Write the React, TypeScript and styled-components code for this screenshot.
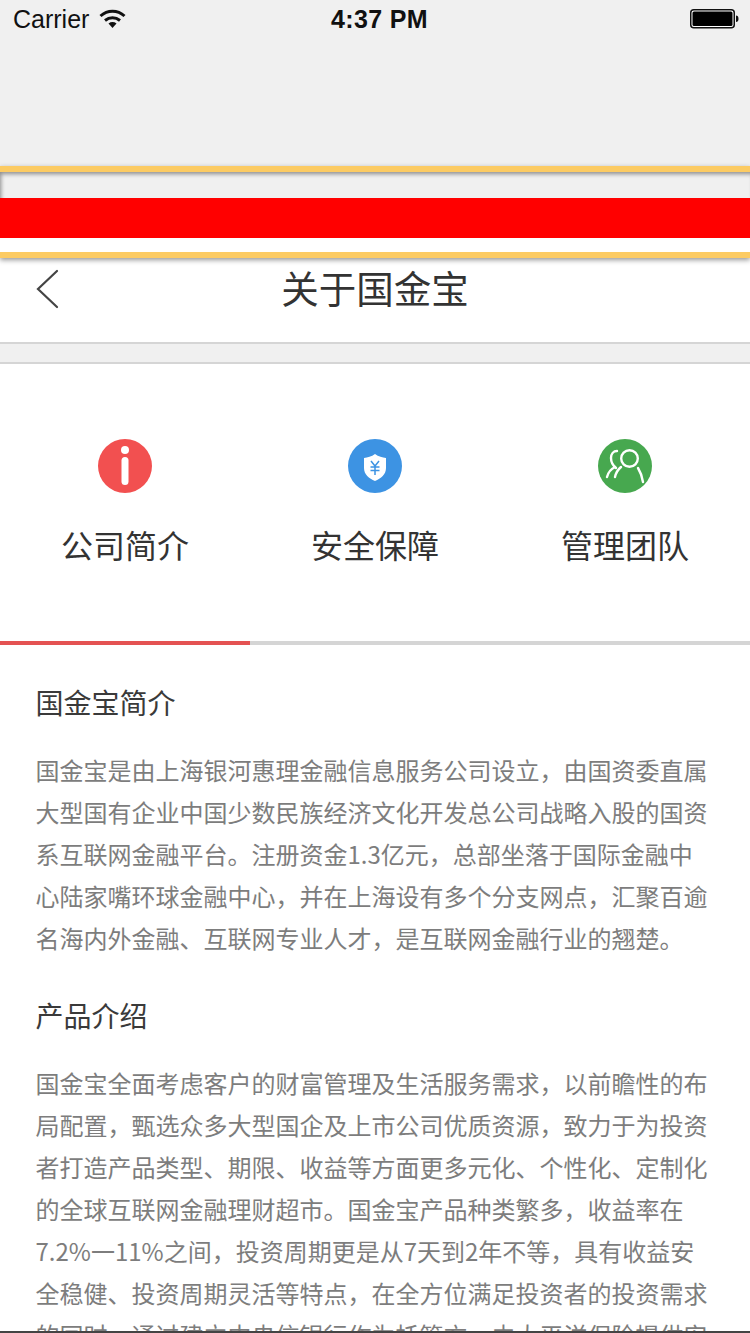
import React from "react";
import styled, { createGlobalStyle } from "styled-components";

const Global = createGlobalStyle`
  html, body { margin: 0; padding: 0; background: #fff; }
  body { width: 750px; height: 1333px; overflow: hidden; }
  #root { height: 1333px; }
`;
const cjk = `"Noto Sans CJK SC", "Noto Sans", sans-serif`;

const Page = styled.div`
  position: relative;
  width: 750px;
  height: 1333px;
  overflow: hidden;
  background: #fff;
  font-family: ${cjk};
`;
const Top = styled.div`
  height: 166px;
  background: #f0f0f0;
`;
const StatusBar = styled.div`
  height: 40px;
  display: grid;
  grid-template-columns: 318px auto 1fr;
  align-items: center;
  padding: 0 11px 2px 13px;
  box-sizing: border-box;
  font-family: "Liberation Sans", Arial, sans-serif;
  color: #111;
  font-size: 25px;
`;
const Carrier = styled.div`
  display: flex;
  align-items: center;
  gap: 10px;
`;
const Clock = styled.div`
  font-weight: 700;
  font-size: 25px;
  letter-spacing: 0.35px;
`;
const Battery = styled.div`
  justify-self: end;
  display: flex;
`;
const Banner = styled.div`
  height: 92px;
  box-sizing: border-box;
  border-top: 6px solid #fccb63;
  border-bottom: 6px solid #fccb63;
  background: #f0f0f0;
  box-shadow: 0 2px 5px rgba(0, 0, 0, 0.42), inset 2px 3px 4px -1px rgba(0, 0, 0, 0.42);
  display: flex;
  flex-direction: column;
  position: relative;
  z-index: 1;
  padding-top: 26px;
`;
const RedBar = styled.div`
  height: 40px;
  background: #ff0000;
`;
const WhiteBar = styled.div`
  height: 14px;
  background: #fff;
`;
const Nav = styled.div`
  height: 84px;
  background: #fff;
  display: flex;
  align-items: center;
  justify-content: center;
  position: relative;
  padding-bottom: 26px;
  box-sizing: border-box;
`;
const Back = styled.svg`
  position: absolute;
  left: 35px;
  top: 11px;
`;
const Title = styled.div`
  font-size: 37.5px;
  line-height: 60px;
  color: #333;
`;
const Divider = styled.div`
  height: 18px;
  background: #f0f0f0;
  border-top: 2px solid #d5d5d5;
  border-bottom: 2px solid #d5d5d5;
`;
const Tabs = styled.div`
  display: grid;
  grid-template-columns: repeat(3, 250px);
  height: 281px;
  box-sizing: border-box;
`;
const Tab = styled.div<{ $active?: boolean }>`
  display: flex;
  flex-direction: column;
  align-items: center;
  padding-top: 75px;
  box-sizing: border-box;
  border-bottom: 4px solid ${(p) => (p.$active ? "#e45252" : "#d5d5d5")};
`;
const TabLabel = styled.div`
  margin-top: 27px;
  font-size: 32px;
  line-height: 48px;
  color: #333;
`;
const Content = styled.div`
  padding: 36px 35px 0 35.5px;
`;
const Heading = styled.h2`
  margin: 0 0 26px;
  font-size: 28px;
  line-height: 42px;
  font-weight: 400;
  color: #3a3a3a;
`;
const Para = styled.p`
  margin: 0 0 35px;
  font-size: 24px;
  line-height: 42px;
  color: #7d7d7d;
`;
const BottomLine = styled.div`
  position: absolute;
  left: 0;
  right: 0;
  bottom: 0;
  height: 2px;
  background: #444;
`;

const Wifi = () => (
  <svg width="27" height="20" viewBox="0 0 27 20" fill="none" stroke="#111" strokeWidth="3">
    <path d="M1.500 7C8.500 .5 18.500 .5 25.500 7" />
    <path d="M6 11.500C10.500 7.800 16.500 7.800 21 11.500" />
    <path d="M9.500 14.500 13.500 19 17.500 14.500C15 12.600 12 12.600 9.500 14.500Z" fill="#111" stroke="none" />
  </svg>
);
const BatteryIcon = () => (
  <svg width="49" height="20" viewBox="0 0 49 20">
    <rect x="0.750" y="0.750" width="43.500" height="18" rx="3" fill="#fff" stroke="#111" strokeWidth="1.500" />
    <rect x="2.500" y="2.500" width="40" height="14.500" rx="1.500" fill="#000" />
    <path d="M46 6.500c1.500 0 2.500 1 2.500 3.200s-1 3.200-2.500 3.200z" fill="#111" />
  </svg>
);
const InfoIcon = () => (
  <svg width="54" height="54" viewBox="0 0 54 54">
    <circle cx="27" cy="27" r="27" fill="#f25050" />
    <circle cx="27" cy="11" r="4" fill="#fff" />
    <rect x="23.500" y="18" width="7" height="28" rx="3.500" fill="#fff" />
  </svg>
);
const ShieldIcon = () => (
  <svg width="54" height="54" viewBox="0 0 54 54">
    <circle cx="27" cy="27" r="27" fill="#3d93e3" />
    <path d="M27 15c3.500 2.600 7.500 3.500 11 4v10c0 6.500-5 10.500-11 13-6-2.500-11-6.500-11-13v-10c3.500-.5 7.500-1.400 11-4z" fill="#fff" />
    <path d="M23 22l4 5 4-5M22.500 28h9M22.500 31.500h9M27 27v9" fill="none" stroke="#3d93e3" strokeWidth="1.500" />
  </svg>
);
const TeamIcon = () => (
  <svg width="54" height="54" viewBox="0 0 54 54" fill="none">
    <circle cx="27" cy="27" r="27" fill="#47a84f" />
    <g stroke="#fff" strokeWidth="2.400" strokeLinecap="round" fill="none">
      <circle cx="31.500" cy="19.500" r="8.300" />
      <path d="M17 38c1-4.500 3-7.500 6-10" />
      <path d="M40 29c2.500 4 4 8 5 14" />
      <path d="M19 12c-3.500 0-6 3-6 7 0 4 2 7.500 5 10" />
      <path d="M9 38c1-4 4-8 8-10" />
    </g>
  </svg>
);

export default function App() {
  return (
    <Page>
      <Global />
      <Top>
        <StatusBar>
          <Carrier>
            Carrier
            <Wifi />
          </Carrier>
          <Clock>4:37 PM</Clock>
          <Battery>
            <BatteryIcon />
          </Battery>
        </StatusBar>
      </Top>
      <Banner>
        <RedBar />
        <WhiteBar />
      </Banner>
      <Nav>
        <Back width="26" height="40" viewBox="0 0 26 40" fill="none" stroke="#444" strokeWidth="2.200" strokeLinecap="round">
          <path d="M22 2 3 20l19 18" />
        </Back>
        <Title>关于国金宝</Title>
      </Nav>
      <Divider />
      <Tabs>
        <Tab $active>
          <InfoIcon />
          <TabLabel>公司简介</TabLabel>
        </Tab>
        <Tab>
          <ShieldIcon />
          <TabLabel>安全保障</TabLabel>
        </Tab>
        <Tab>
          <TeamIcon />
          <TabLabel>管理团队</TabLabel>
        </Tab>
      </Tabs>
      <Content>
        <Heading>国金宝简介</Heading>
        <Para>
          国金宝是由上海银河惠理金融信息服务公司设立，由国资委直属大型国有企业中国少数民族经济文化开发总公司战略入股的国资系互联网金融平台。注册资金1.3亿元，总部坐落于国际金融中心陆家嘴环球金融中心，并在上海设有多个分支网点，汇聚百逾名海内外金融、互联网专业人才，是互联网金融行业的翘楚。
        </Para>
        <Heading>产品介绍</Heading>
        <Para>
          国金宝全面考虑客户的财富管理及生活服务需求，以前瞻性的布局配置，甄选众多大型国企及上市公司优质资源，致力于为投资者打造产品类型、期限、收益等方面更多元化、个性化、定制化的全球互联网金融理财超市。国金宝产品种类繁多，收益率在7.2%一11%之间，投资周期更是从7天到2年不等，具有收益安全稳健、投资周期灵活等特点，在全方位满足投资者的投资需求的同时，通过建立中央信银行作为托管方，由太平洋保险提供安全保障。
        </Para>
      </Content>
      <BottomLine />
    </Page>
  );
}
